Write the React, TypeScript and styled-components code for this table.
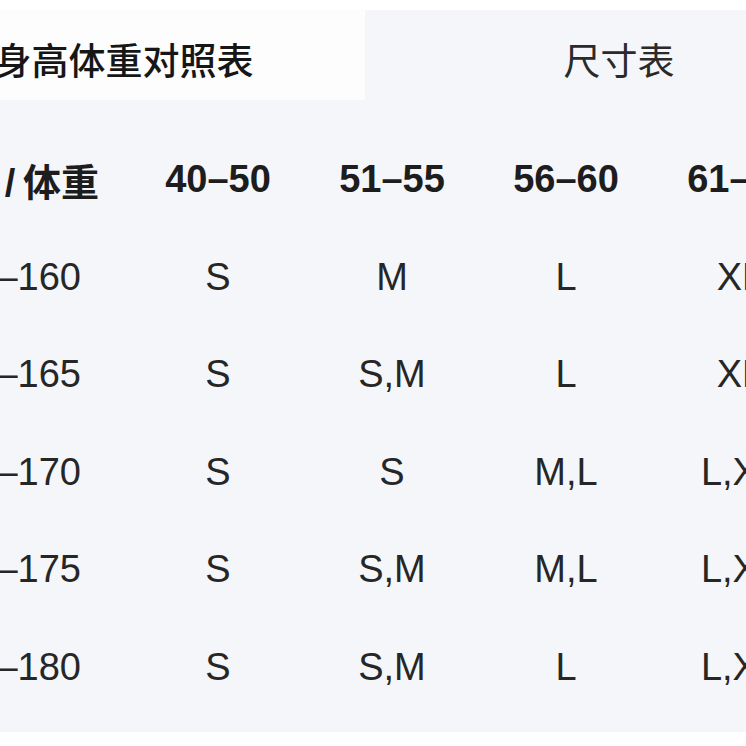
import React from 'react';
import styled, {createGlobalStyle} from 'styled-components'

const GlobalStyle = createGlobalStyle`
    html, body {
        margin:0;
        padding:0;
        background:#ffffff;
        overflow:hidden;
    }
    body {
        width:746px;
        height:746px;
        font-family:"Liberation Sans", "Noto Sans CJK SC", Arial, sans-serif;
    }
`

type SizeRow = {
    height:string,
    sizes:string[]
}

const weightRanges = ["40–50", "51–55", "56–60", "61–65", "66–70"]

const rows: SizeRow[] = [
    {height:"155–160", sizes:["S", "M", "L", "XL", "XL"]},
    {height:"161–165", sizes:["S", "S,M", "L", "XL", "XL"]},
    {height:"166–170", sizes:["S", "S", "M,L", "L,XL", "XL"]},
    {height:"171–175", sizes:["S", "S,M", "M,L", "L,XL", "XL"]},
    {height:"176–180", sizes:["S", "S,M", "L", "L,XL", "XL"]},
]

// the chart is wider than the frame; its left part falls outside like in the shot
const Page = styled.div`
    padding-top:10px;
    width:746px;
    height:746px;
    box-sizing:border-box;
`
const Panel = styled.div`
    margin-left:-117px;
    width:1000px;
    height:722px;
    background:#f4f6f9;
    display:flex;
    flex-direction:column;
`
const Tabs = styled.div`
    display:flex;
    height:90px;
`
const Tab = styled.div<{$active?:boolean, $width:number}>`
    width:${p => p.$width}px;
    display:flex;
    align-items:center;
    justify-content:center;
    padding-top:8px;
    box-sizing:border-box;
    background:${p => p.$active ? '#fdfdfd' : 'transparent'};
    font-family:"Noto Sans CJK SC", sans-serif;
    font-size:37px;
    font-weight:${p => p.$active ? 500 : 400};
    color:${p => p.$active ? '#161616' : '#2a2a2a'};
`
const Table = styled.div`
    display:grid;
    grid-template-columns:248px repeat(5, 174px);
    grid-auto-rows:97.5px;
    padding-top:31px;
`
const Cell = styled.div<{$head?:boolean}>`
    display:flex;
    align-items:center;
    justify-content:center;
    white-space:nowrap;
    font-size:38px;
    font-weight:${p => p.$head ? 700 : 400};
    color:${p => p.$head ? '#1d1d1d' : '#262626'};
`
const CornerCell = styled(Cell)`
    padding-left:6px;
`

export default function App(){
    return (
        <Page>
            <GlobalStyle/>
            <Panel>
                <Tabs>
                    <Tab $active $width={482}>身高体重对照表</Tab>
                    <Tab $width={508}>尺寸表</Tab>
                </Tabs>
                <Table>
                    <CornerCell $head>{"身高\u2009/\u2009体重"}</CornerCell>
                    {weightRanges.map(w => <Cell $head key={w}>{w}</Cell>)}
                    {rows.map(r => (
                        <React.Fragment key={r.height}>
                            <Cell>{r.height}</Cell>
                            {r.sizes.map((s, i) => <Cell key={i}>{s}</Cell>)}
                        </React.Fragment>
                    ))}
                </Table>
            </Panel>
        </Page>
    )
}
